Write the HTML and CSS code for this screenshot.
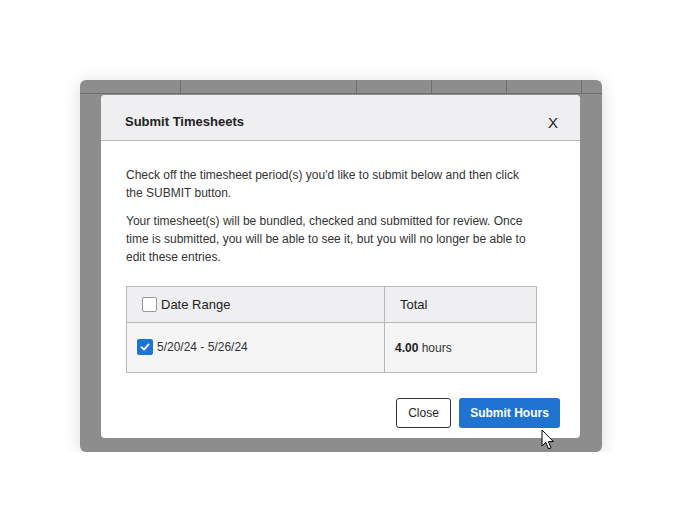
FILE: index.html
```html
<!DOCTYPE html>
<html lang="en">
<head>
    <meta charset="UTF-8">
    <meta name="viewport" content="width=device-width, initial-scale=1.0">
    <title>Submit Timesheets</title>
    <link rel="stylesheet" href="styles.css">
</head>
<body>
    <div class="page">
        <div class="backdrop">
            <!-- table header behind the overlay -->
            <div class="strip">
                <div class="strip-cell c1"></div>
                <div class="strip-cell c2"></div>
                <div class="strip-cell c3"></div>
                <div class="strip-cell c3"></div>
                <div class="strip-cell c3"></div>
                <div class="strip-cell c4"></div>
            </div>

            <div class="modal">
                <div class="modal-header">
                    <h2>Submit Timesheets</h2>
                    <span class="close-x">X</span>
                </div>
                <div class="modal-body">
                    <p>Check off the timesheet period(s) you'd like to submit below and then click the SUBMIT button.</p>
                    <p>Your timesheet(s) will be bundled, checked and submitted for review. Once time is submitted, you will be able to see it, but you will no longer be able to edit these entries.</p>

                    <table class="periods">
                        <colgroup>
                            <col class="col-range">
                            <col>
                        </colgroup>
                        <tr class="head">
                            <th class="range"><span class="box"></span>Date Range</th>
                            <th class="total">Total</th>
                        </tr>
                        <tr class="row">
                            <td class="range">
                                <span class="box checked">
                                    <svg width="12" height="12" viewBox="0 0 12 12"><path d="M2.5 6.2 L5 8.6 L9.6 3.4" fill="none" stroke="#fff" stroke-width="1.8" stroke-linecap="round" stroke-linejoin="round"/></svg>
                                </span>5/20/24 - 5/26/24
                            </td>
                            <td class="total"><b>4.00</b> hours</td>
                        </tr>
                    </table>
                </div>
                <div class="modal-footer">
                    <button class="btn btn-close">Close</button>
                    <button class="btn btn-submit">Submit Hours</button>
                </div>
            </div>

            <svg class="cursor" width="14" height="22" viewBox="0 0 14 22">
                <path d="M1 1 L1 17 L4.8 13.4 L7.6 19.8 L10 18.8 L7.3 12.6 L12.4 12.6 Z" fill="#fff" stroke="#000" stroke-width="1" stroke-linejoin="round"/>
            </svg>
        </div>
    </div>
</body>
</html>
```

FILE: styles.css
```css
body {
    margin: 0;
    background: #fff;
    font-family: Arial, "Liberation Sans", sans-serif;
    color: #333;
}

.page {
    padding: 80px 0 0 80px;
}

.backdrop {
    position: relative;
    width: 522px;
    height: 372px;
    background: #8d8d8d;
    border-radius: 6px;
    box-shadow: 0 2px 18px rgba(0, 0, 0, 0.14);
}

.strip {
    display: flex;
    height: 13px;
    border-bottom: 1px solid #6e6e6e;
}

.strip-cell {
    border-right: 1px solid #6e6e6e;
}

.c1 { width: 100px; }
.c2 { width: 175px; }
.c3 { width: 74px; }
.c4 { flex: 1; border-right: none; }

.modal {
    position: absolute;
    left: 21px;
    top: 15px;
    width: 479px;
    height: 343px;
    background: #fff;
    border-radius: 4px;
    display: flex;
    flex-direction: column;
    overflow: hidden;
}

.modal-header {
    display: flex;
    align-items: center;
    justify-content: space-between;
    height: 45px;
    padding: 0 22px 0 24px;
    background: #efeff1;
    border-bottom: 1px solid #b8b8b8;
}

.modal-header h2 {
    margin: 7px 0 0;
    font-size: 13px;
    font-weight: bold;
    color: #222;
}

.close-x {
    font-size: 15px;
    color: #222;
    margin-top: 9px;
}

.modal-body {
    flex: 1;
    padding: 25px 44px 0 25px;
}

.modal-body p {
    margin: 0 0 10px;
    font-size: 12px;
    line-height: 18px;
    color: #333;
}

.periods {
    margin-top: 20px;
    width: 411px;
    table-layout: fixed;
    border-collapse: collapse;
    font-size: 12px;
}

.col-range {
    width: 258px;
}

.periods th,
.periods td {
    border: 1px solid #b8b8b8;
    text-align: left;
    padding: 0;
}

.head {
    height: 36px;
    background: #efeff1;
}

.head th {
    font-size: 13px;
    font-weight: normal;
    color: #222;
}

.row {
    height: 50px;
    background: #f5f5f5;
}

.head .range {
    padding-left: 15px;
}

.row .range {
    padding-left: 10px;
}

.head .total {
    padding-left: 15px;
}

.row .total {
    padding-left: 10px;
    color: #333;
}

.row .total b {
    color: #222;
}

.box {
    display: inline-block;
    vertical-align: middle;
    width: 15px;
    height: 15px;
    margin: -2px 4px 0 0;
    border: 1px solid #999;
    border-radius: 2px;
    background: #fff;
    box-sizing: border-box;
}

.box.checked {
    width: 16px;
    height: 16px;
    border: none;
    background: #1c74d4;
    display: inline-flex;
    align-items: center;
    justify-content: center;
}

.modal-footer {
    display: flex;
    justify-content: flex-end;
    gap: 8px;
    padding: 0 20px 10px 0;
}

.btn {
    height: 30px;
    font-family: Arial, "Liberation Sans", sans-serif;
    font-size: 12px;
    border-radius: 3px;
    cursor: pointer;
}

.btn-close {
    width: 55px;
    background: #fff;
    border: 1px solid #333;
    color: #222;
}

.btn-submit {
    width: 101px;
    background: #1f74d2;
    border: none;
    color: #fff;
    font-weight: bold;
}

.cursor {
    position: absolute;
    left: 461px;
    top: 349px;
}
```
